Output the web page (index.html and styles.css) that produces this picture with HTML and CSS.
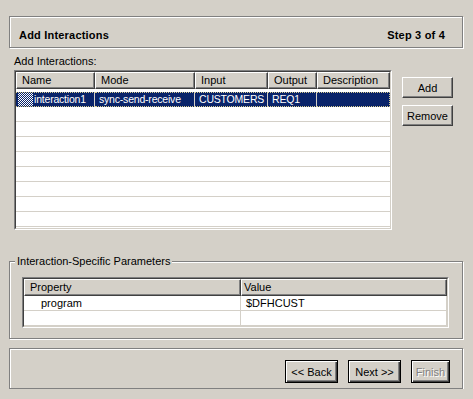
FILE: index.html
```html
<!DOCTYPE html>
<html lang="en">

<head>
  <meta charset="UTF-8">
  <title>Add Interactions</title>
  <link rel="stylesheet" href="styles.css">
</head>

<body>
  <div class="wizard">
    <div class="panel title-bar">
      <span>Add Interactions</span>
      <span>Step 3 of 4</span>
    </div>

    <div class="section-label">Add Interactions:</div>

    <div class="interactions">
      <div class="grid-frame">
        <div class="grid interactions-grid">
          <div class="head">Name</div>
          <div class="head">Mode</div>
          <div class="head">Input</div>
          <div class="head">Output</div>
          <div class="head">Description</div>

          <div class="cell sel first"><span class="row-marker"></span>interaction1</div>
          <div class="cell sel">sync-send-receive</div>
          <div class="cell sel">CUSTOMERS</div>
          <div class="cell sel">REQ1</div>
          <div class="cell sel last"></div>
        </div>
      </div>

      <div class="side-buttons">
        <button class="btn">Add</button>
        <button class="btn">Remove</button>
      </div>
    </div>

    <fieldset class="params">
      <legend>Interaction-Specific Parameters</legend>
      <div class="grid-frame">
        <div class="grid params-grid">
          <div class="head">Property</div>
          <div class="head value-head">Value</div>

          <div class="cell prop">program</div>
          <div class="cell">$DFHCUST</div>
          <div class="cell"></div>
          <div class="cell"></div>
        </div>
      </div>
    </fieldset>

    <div class="panel nav-bar">
      <button class="btn nav">&lt;&lt; Back</button>
      <button class="btn nav">Next &gt;&gt;</button>
      <button class="btn nav finish" disabled>Finish</button>
    </div>
  </div>
</body>

</html>
```

FILE: styles.css
```css
body {
  margin: 0;
  background-color: #d4d0c8;
  font-family: "Liberation Sans", Arial, sans-serif;
  font-size: 11px;
  line-height: 13px;
  color: #000;
}

.wizard {
  padding: 16px 9px 0 9px;
  width: 454px;
}

/* etched panels */
.panel {
  box-sizing: border-box;
  width: 454px;
  border: 1px solid #808080;
  box-shadow: inset 1px 1px 0 #fff, 1px 1px 0 #fff;
}

.title-bar {
  height: 32px;
  display: flex;
  justify-content: space-between;
  padding: 12px 17px 0 9px;
  font-weight: bold;
  letter-spacing: 0.2px;
}

.section-label {
  margin-top: 7px;
  padding-left: 5px;
}

.interactions {
  display: flex;
  margin-top: 2px;
  padding-left: 5px;
  gap: 10px;
}

/* sunken table frame */
.grid-frame {
  border: 1px solid;
  border-color: #808080 #fff #fff #808080;
}

.grid {
  border: 1px solid;
  border-color: #404040 #d4d0c8 #d4d0c8 #404040;
  background-color: #fff;
  display: grid;
  align-content: start;
}

.interactions-grid {
  grid-template-columns: 79px 100px 73px 49px 73px;
  grid-template-rows: 20px;
  grid-auto-rows: 15px;
  height: 156px;
  background-image: repeating-linear-gradient(to bottom, #fff 0 14px, #d4d0c8 14px 15px),
    linear-gradient(to right, transparent 78px, #d4d0c8 78px 79px, transparent 79px 178px, #d4d0c8 178px 179px, transparent 179px 251px, #d4d0c8 251px 252px, transparent 252px 300px, #d4d0c8 300px 301px, transparent 301px);
  background-position: 0 20px, 0 20px;
  background-repeat: repeat-y, no-repeat;
}

.head {
  box-sizing: border-box;
  height: 17px;
  border: 1px solid;
  border-color: #fff #404040 #404040 #fff;
  box-shadow: inset -1px -1px 0 #808080;
  background-color: #d4d0c8;
  padding-left: 5px;
  line-height: 14px;
  white-space: nowrap;
  overflow: hidden;
}

.interactions-grid .head {
  margin-bottom: 3px;
}

.cell {
  box-sizing: border-box;
  height: 15px;
  border-right: 1px solid #d4d0c8;
  border-bottom: 1px solid #d4d0c8;
  padding-left: 5px;
  line-height: 14px;
  white-space: nowrap;
  overflow: hidden;
}

.cell.sel {
  background-color: #0a246a;
  color: #fff;
  border-top: 1px dotted #d8cc90;
  border-bottom: 1px dotted #d8cc90;
  padding-left: 4px;
  line-height: 12px;
  font-size: 10.5px;
  letter-spacing: -0.2px;
}

.cell.sel.first {
  display: flex;
  padding-left: 2px;
}

.cell.sel.last {
  border-right: 1px dotted #d8cc90;
}

.row-marker {
  width: 15px;
  height: 13px;
  margin-right: 1px;
  background: repeating-conic-gradient(#fff 0 25%, #0a246a 0 50%) 0 0 / 2px 2px;
}

.side-buttons {
  display: flex;
  flex-direction: column;
  gap: 7px;
  margin-top: 7px;
}

.btn {
  box-sizing: border-box;
  width: 51px;
  height: 21px;
  padding: 0;
  background-color: #d4d0c8;
  border: 1px solid;
  border-color: #fff #404040 #404040 #fff;
  box-shadow: inset -1px -1px 0 #808080;
  font-family: "Liberation Sans", Arial, sans-serif;
  font-size: 11px;
  color: #000;
}

/* parameters group box */
.params {
  box-sizing: border-box;
  width: 454px;
  margin: 25px 0 0 0;
  padding: 9px 13px 10px 5px;
  border: 1px solid #808080;
  box-shadow: inset 1px 1px 0 #fff, 1px 1px 0 #fff;
}

.params legend {
  padding: 0 2px;
  background-color: #d4d0c8;
}

.params .grid-frame {
  margin-left: 7px;
}

.params-grid {
  grid-template-columns: 217px 206px;
  grid-template-rows: 17px;
  grid-auto-rows: 15px;
}

.value-head {
  padding-left: 2px;
}

.cell.prop {
  padding-left: 17px;
}

.nav-bar {
  margin-top: 9px;
  height: 41px;
  display: flex;
  justify-content: flex-end;
  gap: 10px;
  padding: 11px 12px 0 0;
}

.btn.nav {
  height: 23px;
  width: 53px;
  border: 1px solid #000;
  box-shadow: inset 1px 1px 0 #fff, inset -1px -1px 0 #404040, inset -2px -2px 0 #808080;
}

.btn.nav.finish {
  width: 39px;
  color: #808080;
  text-shadow: 1px 1px 0 #fff;
}
```
